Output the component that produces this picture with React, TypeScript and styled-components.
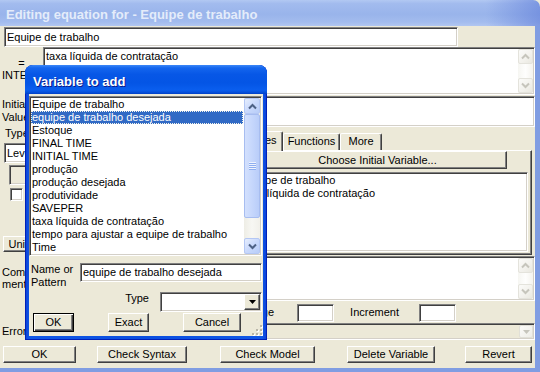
import React from "react";
import styled, { createGlobalStyle, css } from "styled-components";

const FONT = `"Liberation Sans", Arial, sans-serif`;
const FACE = "#ece9d8";

const GlobalStyle = createGlobalStyle`
  * { box-sizing: border-box; }
  html, body { margin: 0; padding: 0; }
  body {
    width: 540px;
    height: 372px;
    overflow: hidden;
    background: ${FACE};
    font-family: ${FONT};
    font-size: 11px;
    color: #000;
  }
`;

const sunken = css`
  border: 1px solid;
  border-color: #808080 #ffffff #ffffff #808080;
  box-shadow: inset 1px 1px 0 #404040, inset -1px -1px 0 #d4d0c8;
`;

const raised = css`
  border: 1px solid;
  border-color: #ffffff #404040 #404040 #ffffff;
  box-shadow: inset -1px -1px 0 #808080;
`;

const inactiveGrad = `linear-gradient(to right, rgba(90,120,215,0) 0%, rgba(90,120,215,0) 90%, rgba(90,120,215,0.55) 100%),
  linear-gradient(to bottom, #b2c8f2 0%, #a2bbee 14%, #99b4eb 55%, #a3bcee 85%, #b1c6f1 100%)`;
const activeGrad = `linear-gradient(to bottom, #3c88f8 0%, #1466ee 10%, #0757e6 32%, #0455e5 62%, #0a5eee 86%, #0550dc 94%, #003fc6 100%)`;

const Window = styled.div`
  position: relative;
  width: 540px;
  height: 372px;
  display: flex;
  flex-direction: column;
  background: ${FACE};
  overflow: hidden;
`;

const TitleBar = styled.div<{ $active?: boolean }>`
  flex: none;
  height: ${(p) => (p.$active ? 29 : 26)}px;
  padding: ${(p) => (p.$active ? "9px 0 0 8px" : "7px 0 0 6px")};
  font-family: ${FONT};
  font-weight: bold;
  font-size: 13px;
  line-height: 15px;
  white-space: nowrap;
  color: ${(p) => (p.$active ? "#ffffff" : "#e4ecfa")};
  text-shadow: ${(p) => (p.$active ? "1px 1px 0 #0a1a8c" : "none")};
  border-radius: ${(p) => (p.$active ? "8px 8px 0 0" : "0 7px 0 0")};
  background: ${(p) => (p.$active ? activeGrad : inactiveGrad)};
`;

const Client = styled.div`
  flex: 1;
  display: flex;
  flex-direction: column;
  padding-top: 1px;
  background: ${FACE};
  border-right: 5px solid #809de2;
  border-bottom: 4px solid #809de2;
`;

const Row = styled.div<{ $h: number; $mt?: number; $pl?: number }>`
  display: flex;
  align-items: center;
  height: ${(p) => p.$h}px;
  margin-top: ${(p) => p.$mt ?? 0}px;
  padding-left: ${(p) => p.$pl ?? 0}px;
`;

const LabeledRow = styled.div<{ $h: number; $mt?: number; $label?: number }>`
  display: grid;
  grid-template-columns: ${(p) => p.$label ?? 43}px 1fr;
  height: ${(p) => p.$h}px;
  margin-top: ${(p) => p.$mt ?? 0}px;
`;

const SideLabel = styled.div<{ $pt: number; $lh: number }>`
  padding: ${(p) => p.$pt}px 0 0 2px;
  line-height: ${(p) => p.$lh}px;
  white-space: nowrap;
  overflow: hidden;
`;

const EqSign = styled.div`
  text-align: center;
  margin-left: -2px;
`;

const Field = styled.div<{ $w?: number; $h: number; $bg?: string }>`
  ${sunken};
  flex: none;
  width: ${(p) => (p.$w ? `${p.$w}px` : "auto")};
  height: ${(p) => p.$h}px;
  background: ${(p) => p.$bg ?? "#ffffff"};
  padding: 0 2px;
  line-height: 13px;
  display: flex;
  align-items: center;
  white-space: nowrap;
  overflow: hidden;
`;

const EditBox = styled.div`
  ${sunken};
  background: #ffffff;
  display: flex;
  padding: 1px;
  min-width: 0;
`;

const EditText = styled.div`
  flex: 1;
  padding: 1px 1px;
  line-height: 13px;
  white-space: nowrap;
  overflow: hidden;
`;

/* scrollbars */

const ScrollTrack = styled.div<{ $on?: boolean }>`
  flex: none;
  width: ${(p) => (p.$on ? 16 : 15)}px;
  margin-left: ${(p) => (p.$on ? 1 : 0)}px;
  display: flex;
  flex-direction: column;
  background: ${(p) =>
    p.$on
      ? "linear-gradient(to right, #eeede5, #f7f7f3 50%, #f1f0ea)"
      : "linear-gradient(to right, #f6f6f2, #fefefd 50%, #f4f3ee)"};
`;

const ScrollButton = styled.div<{ $on?: boolean }>`
  flex: none;
  height: ${(p) => (p.$on ? 16 : 15)}px;
  display: flex;
  align-items: center;
  justify-content: center;
  border-radius: 2px;
  border: 1px solid ${(p) => (p.$on ? "#b4c7f4" : "#e4e3dc")};
  background: ${(p) =>
    p.$on
      ? "linear-gradient(135deg, #e6eefd 0%, #c9d9fc 50%, #b8cdf8 100%)"
      : "linear-gradient(135deg, #fbfbf9 0%, #f2f1ec 60%, #e9e8e0 100%)"};
`;

const ScrollThumb = styled.div<{ $h: number }>`
  flex: none;
  height: ${(p) => p.$h}px;
  border-radius: 2px;
  border: 1px solid #a7bdf0;
  background: linear-gradient(to right, #d3e0fd 0%, #c6d7fc 50%, #b9cdf9 100%);
  display: flex;
  align-items: center;
  justify-content: center;
`;

const Grip = styled.div`
  width: 7px;
  height: 8px;
  background: repeating-linear-gradient(to bottom, #eef3fe 0 1px, #8eaef0 1px 2px);
`;

const Fill = styled.div<{ $w?: number }>`
  flex: ${(p) => (p.$w ? "none" : "1")};
  width: ${(p) => (p.$w ? `${p.$w}px` : "auto")};
`;

function Chevron({ dir, color }: { dir: "up" | "down"; color: string }) {
  const pts = dir === "up" ? "1,5.5 4.5,2 8,5.5" : "1,1.5 4.5,5 8,1.5";
  return (
    <svg width="9" height="7" viewBox="0 0 9 7">
      <polyline points={pts} fill="none" stroke={color} strokeWidth="2" />
    </svg>
  );
}

function ScrollBar({ enabled, thumb = 0 }: { enabled?: boolean; thumb?: number }) {
  const arrow = enabled ? "#4d6185" : "#c6c5bc";
  return (
    <ScrollTrack $on={enabled}>
      <ScrollButton $on={enabled}>
        <Chevron dir="up" color={arrow} />
      </ScrollButton>
      {enabled && (
        <ScrollThumb $h={thumb}>
          <Grip />
        </ScrollThumb>
      )}
      <Fill />
      <ScrollButton $on={enabled}>
        <Chevron dir="down" color={arrow} />
      </ScrollButton>
    </ScrollTrack>
  );
}

/* combo boxes */

const Combo = styled.div<{ $w?: number; $h: number; $bg?: string }>`
  ${sunken};
  flex: none;
  width: ${(p) => (p.$w ? `${p.$w}px` : "auto")};
  height: ${(p) => p.$h}px;
  background: ${(p) => p.$bg ?? "#ffffff"};
  padding: 1px;
  display: flex;
`;

const ComboText = styled.div`
  flex: 1;
  padding-left: 1px;
  line-height: 13px;
  display: flex;
  align-items: center;
  white-space: nowrap;
  overflow: hidden;
`;

const ComboArrow = styled.div<{ $xp?: boolean }>`
  flex: none;
  width: ${(p) => (p.$xp ? 14 : 16)}px;
  display: flex;
  align-items: center;
  justify-content: center;
  background: ${FACE};
  ${(p) =>
    p.$xp
      ? css`
          border: 1px solid #e1e0d8;
          border-radius: 2px;
          background: linear-gradient(135deg, #fbfbf9, #eeede7);
        `
      : raised};
`;

function DownTriangle({ color }: { color: string }) {
  return (
    <svg width="7" height="4" viewBox="0 0 7 4">
      <polygon points="0,0 7,0 3.5,4" fill={color} />
    </svg>
  );
}

/* buttons */

const Btn = styled.button<{ $w: number; $h: number; $ml?: number; $def?: boolean }>`
  flex: none;
  width: ${(p) => p.$w}px;
  height: ${(p) => p.$h}px;
  margin: 0 0 0 ${(p) => p.$ml ?? 0}px;
  padding: 0;
  font-family: ${FONT};
  font-size: 11px;
  line-height: 13px;
  color: #000;
  background: ${FACE};
  white-space: nowrap;
  ${(p) =>
    p.$def
      ? css`
          border: 1px solid #000;
          box-shadow: inset 1px 1px 0 #ffffff, inset -1px -1px 0 #404040,
            inset -2px -2px 0 #808080;
        `
      : raised};
`;

/* middle section */

const Middle = styled.div`
  display: grid;
  grid-template-columns: 225px 307px;
  height: 128px;
`;

const LeftCol = styled.div`
  display: flex;
  flex-direction: column;
  align-items: flex-start;
`;

const PlainLabel = styled.div<{ $pl?: number }>`
  padding-left: ${(p) => p.$pl ?? 0}px;
  line-height: 13px;
  white-space: nowrap;
`;

const RangeLabel = styled.div`
  flex: 1;
  text-align: right;
  margin-right: 23px;
  line-height: 13px;
  white-space: nowrap;
`;

const InlineLabel = styled.div<{ $ml: number; $mr: number }>`
  margin: 0 ${(p) => p.$mr}px 0 ${(p) => p.$ml}px;
  line-height: 13px;
  white-space: nowrap;
`;

const Spaced = styled.div<{ $mt: number; $ml: number }>`
  margin: ${(p) => p.$mt}px 0 0 ${(p) => p.$ml}px;
  display: flex;
`;

const GrayBox = styled.div`
  ${sunken};
  width: 70px;
  height: 20px;
  background: ${FACE};
`;

const CheckBox = styled.div`
  ${sunken};
  width: 13px;
  height: 13px;
  background: #ffffff;
`;

const TabArea = styled.div`
  display: flex;
  flex-direction: column;
  padding-top: 6px;
`;

const TabStrip = styled.div`
  display: flex;
  height: 17px;
  position: relative;
  z-index: 1;
`;

const Tab = styled.div<{ $w: number; $sel?: boolean }>`
  flex: none;
  width: ${(p) => p.$w}px;
  height: ${(p) => (p.$sel ? 20 : 17)}px;
  margin-top: ${(p) => (p.$sel ? -2 : 0)}px;
  padding-top: ${(p) => (p.$sel ? 2 : 1)}px;
  border: 1px solid;
  border-bottom: none;
  border-color: #ffffff #404040 transparent #ffffff;
  border-radius: 2px 2px 0 0;
  box-shadow: inset -1px 0 0 #808080;
  background: ${FACE};
  text-align: center;
  line-height: 13px;
  white-space: nowrap;
`;

const Panel = styled.div`
  flex: 1;
  ${raised};
  display: flex;
  flex-direction: column;
  align-items: flex-start;
`;

const VarList = styled.div`
  ${sunken};
  margin: 3px 0 0 13px;
  width: 289px;
  height: 80px;
  background: #ffffff;
  padding: 1px 1px 1px 2px;
`;

const ListLine = styled.div<{ $sel?: boolean }>`
  height: 13px;
  line-height: 13px;
  padding-left: 1px;
  white-space: nowrap;
  ${(p) =>
    p.$sel &&
    css`
      background: #316ac5;
      color: #ffffff;
      outline: 1px dotted #f4f4e8;
      outline-offset: -1px;
    `};
`;

/* dialog */

const Dialog = styled.div`
  position: absolute;
  z-index: 10;
  left: 25px;
  top: 65px;
  width: 242px;
  height: 275px;
  display: flex;
  flex-direction: column;
  border-radius: 8px 8px 0 0;
  background: linear-gradient(to right, #0b3fd6 0%, #1058e6 2%, #0a4ee0 50%, #1058e6 98%, #0b3fd6 100%);
  box-shadow: inset 0 0 0 1px #0020b8;
`;

const DialogClient = styled.div`
  flex: 1;
  position: relative;
  margin: 0 4px 4px 4px;
  padding-top: 2px;
  background: ${FACE};
  display: flex;
  flex-direction: column;
`;

const ListBox = styled.div`
  ${sunken};
  width: 233px;
  height: 160px;
  background: #ffffff;
  padding: 1px;
  display: flex;
`;

const ListItems = styled.div`
  flex: 1;
  display: flex;
  flex-direction: column;
  overflow: hidden;
`;

const StackLabel = styled.div`
  width: 51px;
  padding-left: 2px;
  line-height: 13px;
  align-self: flex-start;
`;

const TypeRow = styled.div`
  display: flex;
  justify-content: flex-end;
  align-items: flex-start;
  height: 20px;
  margin-top: 10px;
  padding-right: 1px;
`;

const SizeGrip = styled.div`
  position: absolute;
  right: 0;
  bottom: 0;
  width: 12px;
  height: 12px;
  display: flex;
`;

const variables = [
  "Equipe de trabalho",
  "equipe de trabalho desejada",
  "Estoque",
  "FINAL TIME",
  "INITIAL TIME",
  "produção",
  "produção desejada",
  "produtividade",
  "SAVEPER",
  "taxa líquida de contratação",
  "tempo para ajustar a equipe de trabalho",
  "Time",
];

function GripIcon() {
  const dots: [number, number][] = [
    [9, 1], [9, 5], [5, 5], [9, 9], [5, 9], [1, 9],
  ];
  return (
    <svg width="12" height="12" viewBox="0 0 12 12">
      {dots.map(([x, y]) => (
        <g key={`${x}-${y}`}>
          <rect x={x + 1} y={y + 1} width="2" height="2" fill="#ffffff" />
          <rect x={x} y={y} width="2" height="2" fill="#b9b6a8" />
        </g>
      ))}
    </svg>
  );
}

function VariableDialog() {
  return (
    <Dialog>
      <TitleBar $active>Variable to add</TitleBar>
      <DialogClient>
        <ListBox>
          <ListItems>
            {variables.map((v, i) => (
              <ListLine key={v} $sel={i === 1}>
                {v}
              </ListLine>
            ))}
          </ListItems>
          <ScrollBar enabled thumb={104} />
        </ListBox>
        <Row $h={19} $mt={7}>
          <StackLabel>
            Name or
            <br />
            Pattern
          </StackLabel>
          <Field $w={182} $h={19}>
            equipe de trabalho desejada
          </Field>
        </Row>
        <TypeRow>
          <InlineLabel $ml={0} $mr={11}>
            Type
          </InlineLabel>
          <Combo $w={102} $h={20}>
            <ComboText />
            <ComboArrow>
              <DownTriangle color="#000000" />
            </ComboArrow>
          </Combo>
        </TypeRow>
        <Row $h={19} $mt={1} $pl={4}>
          <Btn $w={41} $h={19} $def>
            OK
          </Btn>
          <Btn $w={41} $h={19} $ml={34}>
            Exact
          </Btn>
          <Btn $w={58} $h={19} $ml={34}>
            Cancel
          </Btn>
        </Row>
        <SizeGrip>
          <GripIcon />
        </SizeGrip>
      </DialogClient>
    </Dialog>
  );
}

export default function App() {
  return (
    <>
      <GlobalStyle />
      <Window>
        <TitleBar>Editing equation for - Equipe de trabalho</TitleBar>
        <Client>
          <Row $h={20} $pl={4}>
            <Field $w={454} $h={20}>
              Equipe de trabalho
            </Field>
          </Row>

          <LabeledRow $h={48}>
            <SideLabel $pt={10} $lh={12}>
              <EqSign>=</EqSign>
              INTEG (
            </SideLabel>
            <EditBox>
              <EditText>taxa líquida de contratação</EditText>
              <ScrollBar />
            </EditBox>
          </LabeledRow>

          <LabeledRow $h={31} $mt={1}>
            <SideLabel $pt={2} $lh={13}>
              Initial
              <br />
              Value
            </SideLabel>
            <EditBox>
              <EditText />
            </EditBox>
          </LabeledRow>

          <Middle>
            <LeftCol>
              <PlainLabel $pl={5}>Type</PlainLabel>
              <Spaced $mt={3} $ml={4}>
                <Combo $w={110} $h={20}>
                  <ComboText>Level</ComboText>
                  <ComboArrow>
                    <DownTriangle color="#000000" />
                  </ComboArrow>
                </Combo>
              </Spaced>
              <Spaced $mt={2} $ml={9}>
                <GrayBox />
              </Spaced>
              <Spaced $mt={3} $ml={10}>
                <CheckBox />
              </Spaced>
              <Spaced $mt={35} $ml={3}>
                <Btn $w={36} $h={16}>
                  Units
                </Btn>
              </Spaced>
            </LeftCol>
            <TabArea>
              <TabStrip>
                <Tab $w={58} $sel>
                  Variables
                </Tab>
                <Tab $w={57}>Functions</Tab>
                <Tab $w={42}>More</Tab>
              </TabStrip>
              <Panel>
                <Btn $w={259} $h={18} $ml={22}>
                  Choose Initial Variable...
                </Btn>
                <VarList>
                  <ListLine>Equipe de trabalho</ListLine>
                  <ListLine>taxa líquida de contratação</ListLine>
                </VarList>
              </Panel>
            </TabArea>
          </Middle>

          <LabeledRow $h={45} $mt={1}>
            <SideLabel $pt={10} $lh={12}>
              Com-
              <br />
              ment
            </SideLabel>
            <EditBox>
              <EditText />
              <ScrollBar />
            </EditBox>
          </LabeledRow>

          <Row $h={19} $mt={2} $pl={43}>
            <RangeLabel>Range</RangeLabel>
            <Field $w={37} $h={18} />
            <InlineLabel $ml={16} $mr={20}>
              Increment
            </InlineLabel>
            <Field $w={37} $h={18} />
            <Fill $w={79} />
          </Row>

          <LabeledRow $h={17} $mt={1} $label={42}>
            <SideLabel $pt={2} $lh={13}>
              Errors
            </SideLabel>
            <Combo $h={17} $bg={FACE}>
              <ComboText />
              <ComboArrow $xp>
                <DownTriangle color="#c6c5bc" />
              </ComboArrow>
            </Combo>
          </LabeledRow>

          <Row $h={17} $mt={6} $pl={3}>
            <Btn $w={73} $h={17}>
              OK
            </Btn>
            <Btn $w={90} $h={17} $ml={21}>
              Check Syntax
            </Btn>
            <Btn $w={95} $h={17} $ml={33}>
              Check Model
            </Btn>
            <Btn $w={88} $h={17} $ml={32}>
              Delete Variable
            </Btn>
            <Btn $w={67} $h={17} $ml={30}>
              Revert
            </Btn>
          </Row>
        </Client>
        <VariableDialog />
      </Window>
    </>
  );
}
